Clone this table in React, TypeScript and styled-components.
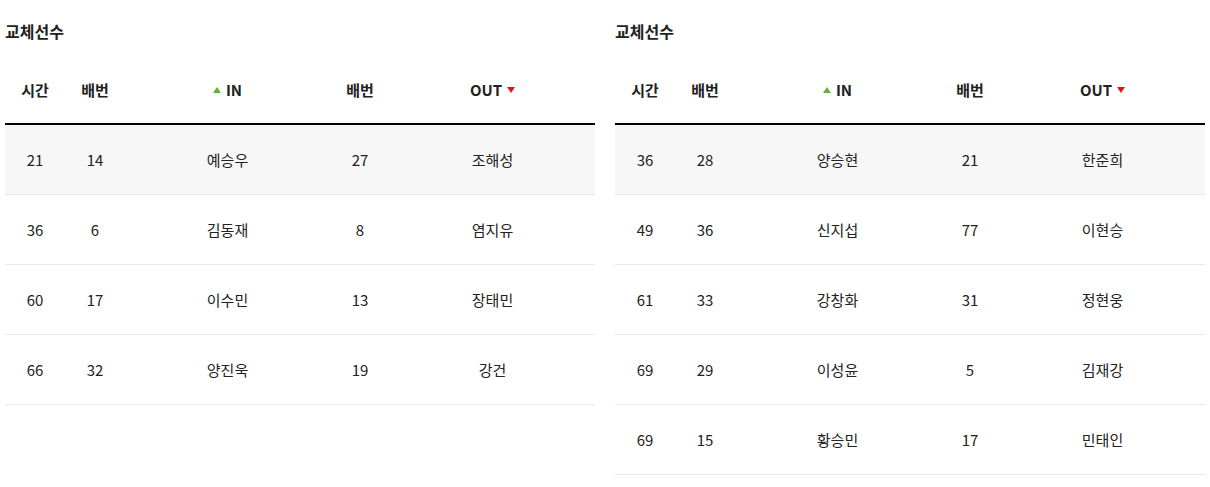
import styled, { createGlobalStyle } from 'styled-components';

const GlobalStyle = createGlobalStyle`
  body {
    margin: 0;
    background: #fff;
    font-family: 'Noto Sans CJK KR', 'Noto Sans', sans-serif;
    color: #222;
  }
`;

type Sub = { time: number; inNo: number; inName: string; outNo: number; outName: string };

const home: Sub[] = [
  { time: 21, inNo: 14, inName: '예승우', outNo: 27, outName: '조해성' },
  { time: 36, inNo: 6, inName: '김동재', outNo: 8, outName: '염지유' },
  { time: 60, inNo: 17, inName: '이수민', outNo: 13, outName: '장태민' },
  { time: 66, inNo: 32, inName: '양진욱', outNo: 19, outName: '강건' },
];

const away: Sub[] = [
  { time: 36, inNo: 28, inName: '양승현', outNo: 21, outName: '한준희' },
  { time: 49, inNo: 36, inName: '신지섭', outNo: 77, outName: '이현승' },
  { time: 61, inNo: 33, inName: '강창화', outNo: 31, outName: '정현웅' },
  { time: 69, inNo: 29, inName: '이성윤', outNo: 5, outName: '김재강' },
  { time: 69, inNo: 15, inName: '황승민', outNo: 17, outName: '민태인' },
];

const Page = styled.div`
  display: flex;
  gap: 20px;
  padding: 19px 5px 0;
`;

const Section = styled.section`
  width: 590px;
`;

const Title = styled.h3`
  margin: 0 0 14px;
  font-size: 16px;
  line-height: 24px;
  font-weight: 700;
  color: #222;
`;

const Table = styled.table`
  width: 100%;
  border-collapse: collapse;
  table-layout: fixed;
`;

const Head = styled.th<{ $w: number }>`
  width: ${(p) => p.$w}px;
  height: 64px;
  padding: 0 0 2px;
  font-size: 15px;
  font-weight: 700;
  color: #222;
  text-align: center;
  border-bottom: 2px solid #000;
  white-space: nowrap;
`;

const Row = styled.tr<{ $shade: boolean }>`
  background: ${(p) => (p.$shade ? '#f7f7f7' : '#fff')};
`;

const Cell = styled.td`
  height: 69px;
  padding: 0;
  font-size: 15px;
  color: #222;
  text-align: center;
  border-bottom: 1px solid #e8e8e8;
`;

const Arrow = styled.span<{ $dir: 'up' | 'down' }>`
  display: inline-block;
  width: 0;
  height: 0;
  border-left: 4px solid transparent;
  border-right: 4px solid transparent;
  ${(p) =>
    p.$dir === 'up'
      ? 'border-bottom: 6px solid #5fb336; margin-right: 5px;'
      : 'border-top: 6px solid #e8141c; margin-left: 5px;'}
  vertical-align: 3px;
`;

function SubTable({ rows }: { rows: Sub[] }) {
  return (
    <Section>
      <Title>교체선수</Title>
      <Table>
        <thead>
          <tr>
            <Head $w={60}>시간</Head>
            <Head $w={60}>배번</Head>
            <Head $w={205}>
              <Arrow $dir="up" />IN
            </Head>
            <Head $w={60}>배번</Head>
            <Head $w={205}>
              OUT<Arrow $dir="down" />
            </Head>
          </tr>
        </thead>
        <tbody>
          {rows.map((r, i) => (
            <Row key={i} $shade={i === 0}>
              <Cell>{r.time}</Cell>
              <Cell>{r.inNo}</Cell>
              <Cell>{r.inName}</Cell>
              <Cell>{r.outNo}</Cell>
              <Cell>{r.outName}</Cell>
            </Row>
          ))}
        </tbody>
      </Table>
    </Section>
  );
}

export default function App() {
  return (
    <>
      <GlobalStyle />
      <Page>
        <SubTable rows={home} />
        <SubTable rows={away} />
      </Page>
    </>
  );
}
